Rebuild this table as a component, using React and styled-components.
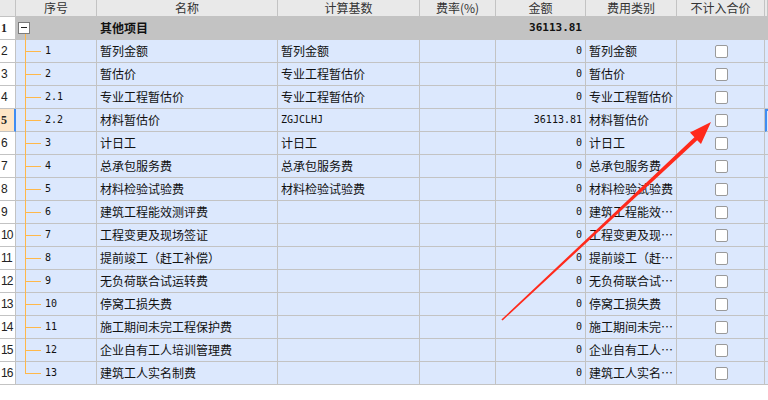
import React from "react";
import styled, { createGlobalStyle, css } from "styled-components";

const GlobalStyle = createGlobalStyle`
  html, body { margin: 0; padding: 0; background: #fff; }
  body { width: 768px; height: 400px; overflow: hidden; }
`;

const CJK = `"Noto Sans CJK SC", "Noto Sans", sans-serif`;
const MONO = `"DejaVu Sans Mono", "Liberation Mono", monospace`;
const LINE = "#c3c3c3";
const TREE = "#ffb84a";

const columns = [
  { key: "no", title: "", width: 16 },
  { key: "seq", title: "序号", width: 81 },
  { key: "name", title: "名称", width: 181 },
  { key: "base", title: "计算基数", width: 142 },
  { key: "rate", title: "费率(%)", width: 76 },
  { key: "amount", title: "金额", width: 90 },
  { key: "type", title: "费用类别", width: 91 },
  { key: "skip", title: "不计入合价", width: 88 },
  { key: "pad", title: "", width: 3 },
];

const rows = [
  ["1", "暂列金额", "暂列金额", "0", "暂列金额"],
  ["2", "暂估价", "专业工程暂估价", "0", "暂估价"],
  ["2.1", "专业工程暂估价", "专业工程暂估价", "0", "专业工程暂估价"],
  ["2.2", "材料暂估价", "ZGJCLHJ", "36113.81", "材料暂估价"],
  ["3", "计日工", "计日工", "0", "计日工"],
  ["4", "总承包服务费", "总承包服务费", "0", "总承包服务费"],
  ["5", "材料检验试验费", "材料检验试验费", "0", "材料检验试验费"],
  ["6", "建筑工程能效测评费", "", "0", "建筑工程能效测评费"],
  ["7", "工程变更及现场签证", "", "0", "工程变更及现场签证"],
  ["8", "提前竣工（赶工补偿）", "", "0", "提前竣工（赶工补偿）"],
  ["9", "无负荷联合试运转费", "", "0", "无负荷联合试运转费"],
  ["10", "停窝工损失费", "", "0", "停窝工损失费"],
  ["11", "施工期间未完工程保护费", "", "0", "施工期间未完工程保护费"],
  ["12", "企业自有工人培训管理费", "", "0", "企业自有工人培训管理费"],
  ["13", "建筑工人实名制费", "", "0", "建筑工人实名制费"],
];

const Page = styled.div`
  position: relative;
  width: 768px;
  height: 400px;
  overflow: hidden;
  background: #fff;
`;

const Grid = styled.div`
  display: grid;
  grid-template-columns: ${columns.map((c) => c.width + "px").join(" ")};
  grid-template-rows: 17px;
  grid-auto-rows: 23px;
`;

const HeadCell = styled.div`
  box-sizing: border-box;
  background: #e9e9e9;
  border-right: 1px solid ${LINE};
  border-bottom: 1px solid ${LINE};
  font: 12px/16px ${CJK};
  color: #333;
  text-align: center;
  white-space: nowrap;
`;

const Cell = styled.div`
  position: relative;
  box-sizing: border-box;
  background: ${(p) => (p.$group ? "#c3c3c3" : "#dce8fd")};
  border-right: 1px solid ${LINE};
  border-bottom: 1px solid ${LINE};
  font: ${(p) => (p.$bold ? 700 : 400)} 12px/22px ${CJK};
  color: #111;
  padding: 0 ${(p) => (p.$right ? "3px" : "0")} 0 3px;
  white-space: nowrap;
  overflow: hidden;
  text-overflow: ellipsis;
  text-align: ${(p) => (p.$right ? "right" : "left")};
`;

const NumCell = styled(Cell)`
  font: ${(p) => (p.$bold ? "700 11px" : "400 10px")}/22px ${MONO};
  padding: 0 3px;
`;

const RowNo = styled.div`
  box-sizing: border-box;
  background: ${(p) => (p.$active ? "#fee5c6" : "#fff")};
  border-right: ${(p) => (p.$active ? "2px solid #3f8cf2" : `1px solid ${LINE}`)};
  border-bottom: 1px solid ${LINE};
  font: ${(p) => (p.$bold ? 700 : 400)} 12px/22px
    ${(p) => (p.$bold ? `"Liberation Serif", serif` : `"Liberation Sans", sans-serif`)};
  letter-spacing: ${(p) => (p.$bold ? "0" : "-0.8px")};
  color: #222;
  padding-left: 1px;
  white-space: nowrap;
  position: relative;
  z-index: 1;
`;

const Filler = styled.div`
  box-sizing: border-box;
  background: ${(p) => (p.$group ? "#c3c3c3" : "#dce8fd")};
  border-bottom: 1px solid ${LINE};
  ${(p) =>
    p.$active &&
    css`
      border-left: 2px solid #3f8cf2;
      border-top: 2px solid #3f8cf2;
    `}
`;

const SeqCell = styled(Cell)`
  overflow: visible;
  padding-left: 29px;
  font: 10px/22px ${MONO};
`;

const Stem = styled.span`
  position: absolute;
  left: 9px;
  width: 1px;
  background: ${TREE};
  top: ${(p) => (p.$first ? "16px" : "0")};
  bottom: ${(p) => (p.$last ? "11px" : "-1px")};
  z-index: 1;
`;

const Branch = styled.span`
  position: absolute;
  left: 9px;
  top: 11px;
  width: 16px;
  height: 1px;
  background: ${TREE};
`;

const Toggle = styled.span`
  position: absolute;
  left: 2px;
  top: 5px;
  width: 12px;
  height: 12px;
  box-sizing: border-box;
  border: 1px solid #7b7b7b;
  background: #fff;
  z-index: 2;

  &::after {
    content: "";
    position: absolute;
    left: 2px;
    right: 2px;
    top: 4px;
    height: 1px;
    background: #222;
  }
`;

const CheckCell = styled(Cell)`
  display: flex;
  align-items: center;
  justify-content: center;
  padding: 0;
`;

const Box = styled.span`
  width: 13px;
  height: 13px;
  box-sizing: border-box;
  border: 1px solid #9a9a9a;
  border-radius: 2px;
  background: #fff;
  margin-left: 1px;
`;

const Arrow = () => (
  <svg
    width="768"
    height="400"
    style={{ position: "absolute", left: 0, top: 0, pointerEvents: "none" }}
  >
    <polygon
      points="711,122 701,144 697.2,140.2 502.6,320.4 501.4,319.6 694.4,137.2 690,132.5"
      fill="#ff2a1c"
    />
  </svg>
);

export default function App() {
  return (
    <Page>
      <GlobalStyle />
      <Grid>
        {columns.map((c) => (
          <HeadCell key={c.key}>{c.title}</HeadCell>
        ))}

        <RowNo $bold>1</RowNo>
        <SeqCell $group>
          <Toggle />
          <Stem $first />
        </SeqCell>
        <Cell $group $bold>其他项目</Cell>
        <Cell $group />
        <Cell $group />
        <NumCell $group $right $bold>36113.81</NumCell>
        <Cell $group />
        <Cell $group />
        <Filler $group />

        {rows.map(([seq, name, base, amount, type], i) => {
          const n = i + 2;
          const active = n === 5;
          return (
            <React.Fragment key={n}>
              <RowNo $active={active} $bold={active}>
                {n}
              </RowNo>
              <SeqCell>
                <Stem $last={i === rows.length - 1} />
                <Branch />
                {seq}
              </SeqCell>
              <Cell>{name}</Cell>
              {/^[A-Z]+$/.test(base) ? (
                <NumCell>{base}</NumCell>
              ) : (
                <Cell>{base}</Cell>
              )}
              <Cell />
              <NumCell $right>{amount}</NumCell>
              <Cell>{type}</Cell>
              <CheckCell>
                <Box />
              </CheckCell>
              <Filler $active={active} />
            </React.Fragment>
          );
        })}
      </Grid>
      <Arrow />
    </Page>
  );
}
